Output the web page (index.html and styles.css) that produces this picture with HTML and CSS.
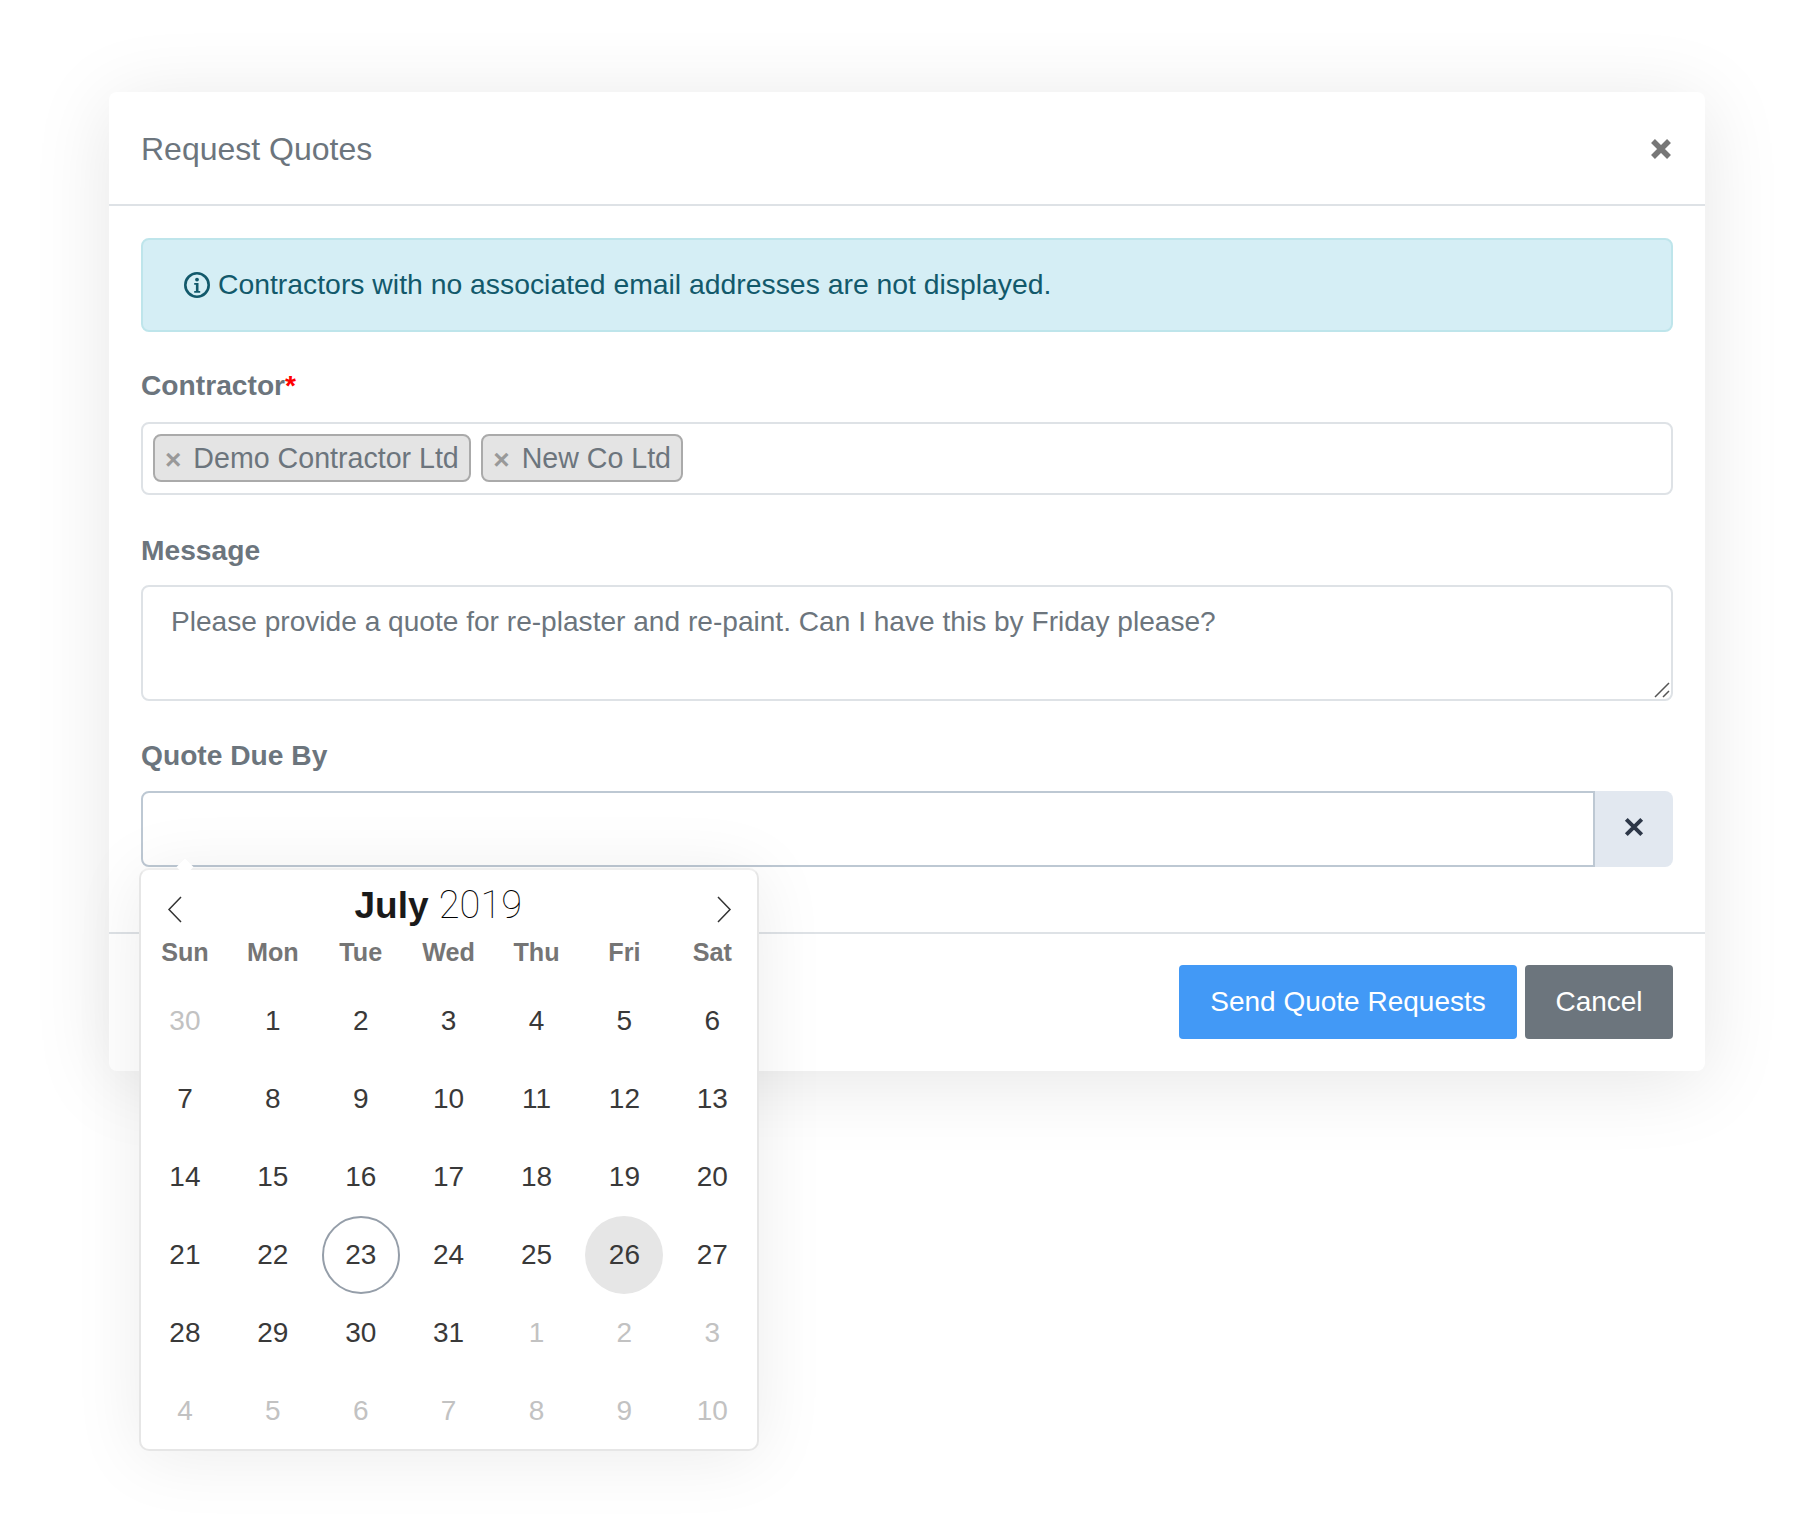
FILE: index.html
```html
<!DOCTYPE html>
<html lang="en">
<head>
<meta charset="utf-8">
<title>Request Quotes</title>
<link rel="stylesheet" href="styles.css">
</head>
<body>
<section class="modal">
  <header class="modal-header">
    <h1 class="modal-title">Request Quotes</h1>
    <svg class="close-icon" viewBox="0 0 22 22"><path d="M3 3 19 19M19 3 3 19"/></svg>
  </header>
  <div class="modal-body">
    <div class="alert">
      <svg class="info-icon" viewBox="0 0 28 28"><circle cx="14" cy="14" r="11.7"/><circle class="info-dot" cx="14" cy="8.6" r="1.9"/><path class="info-stem" d="M11.2 12h4.3v8h1.7v1.8h-6V20h1.7v-6.2h-1.7z"/></svg>
      <span class="alert-text">Contractors with no associated email addresses are not displayed.</span>
    </div>
    <label class="field-label first">Contractor<span class="required">*</span></label>
    <div class="multi-select">
      <span class="tag"><span class="tag-x">×</span>Demo Contractor Ltd</span>
      <span class="tag"><span class="tag-x">×</span>New Co Ltd</span>
    </div>
    <label class="field-label message-label">Message</label>
    <div class="message-wrap">
      <textarea class="message" readonly>Please provide a quote for re-plaster and re-paint. Can I have this by Friday please?</textarea>
      <svg class="grip" viewBox="0 0 16 16"><path d="M1 15 15 1M9 15 15 9"/></svg>
    </div>
    <label class="field-label due-label">Quote Due By</label>
    <div class="date-group">
      <input class="date-input" type="text" readonly>
      <span class="date-clear"><svg viewBox="0 0 20 20"><path d="M3 3 17 17M17 3 3 17"/></svg></span>
      <div class="calendar">
        <div class="calendar-head">
          <svg class="chevron" viewBox="0 0 16 28"><path d="M14 2 2 14.500 14 27"/></svg>
          <div class="month"><b>July</b> <span class="year">2019</span></div>
          <svg class="chevron" viewBox="0 0 16 28"><path d="M2 2 14 14.500 2 27"/></svg>
        </div>
        <div class="weekdays"><span>Sun</span><span>Mon</span><span>Tue</span><span>Wed</span><span>Thu</span><span>Fri</span><span>Sat</span></div>
        <div class="days">
          <span class="off">30</span><span>1</span><span>2</span><span>3</span><span>4</span><span>5</span><span>6</span>
          <span>7</span><span>8</span><span>9</span><span>10</span><span>11</span><span>12</span><span>13</span>
          <span>14</span><span>15</span><span>16</span><span>17</span><span>18</span><span>19</span><span>20</span>
          <span>21</span><span>22</span><span class="today">23</span><span>24</span><span>25</span><span class="hover">26</span><span>27</span>
          <span>28</span><span>29</span><span>30</span><span>31</span><span class="off">1</span><span class="off">2</span><span class="off">3</span>
          <span class="off">4</span><span class="off">5</span><span class="off">6</span><span class="off">7</span><span class="off">8</span><span class="off">9</span><span class="off">10</span>
        </div>
      </div>
    </div>
  </div>
  <footer class="modal-footer">
    <button class="btn btn-primary">Send Quote Requests</button>
    <button class="btn btn-secondary">Cancel</button>
  </footer>
</section>
</body>
</html>
```
FILE: styles.css
```css
* { box-sizing: border-box; }
html, body { margin: 0; background: #fff; }
body {
  height: 1538px;
  overflow: hidden;
  padding: 92px 101px 0 109px;
  font-family: "Liberation Sans", Arial, sans-serif;
  font-size: 28px;
  color: #6c757d;
}
.modal {
  background: #fff;
  border-radius: 8px;
  box-shadow: 0 10px 80px rgba(0, 0, 0, .1);
}
.modal-header {
  height: 114px;
  padding: 2px 32px 0;
  display: flex;
  align-items: center;
  justify-content: space-between;
  border-bottom: 2px solid #dee2e6;
}
.modal-title { margin: 0; font-size: 32px; font-weight: 400; color: #6c757d; }
.close-icon { width: 22px; height: 22px; margin-right: 1px; }
.close-icon path { fill: none; stroke: #777; stroke-width: 5.500; }
.modal-body { padding: 32px 32px 65px; }
.alert {
  height: 94px;
  padding: 0 40px;
  display: flex;
  align-items: center;
  gap: 7px;
  background: #d5eef5;
  border: 2px solid #bee5eb;
  border-radius: 8px;
  color: #12596b;
  font-size: 28.350px;
}
.alert-text { margin-bottom: 2px; }
.info-icon { width: 28px; height: 28px; flex: none; }
.info-icon circle { fill: none; stroke: #12596b; stroke-width: 2.600; }
.info-icon .info-dot { fill: #12596b; stroke: none; }
.info-icon .info-stem { fill: #12596b; }
.field-label { display: block; height: 40px; line-height: 40px; font-size: 28.200px; font-weight: 700; }
.first { margin: 33px 0 17px; }
.message-label { margin: 35px 0 15px; }
.due-label { margin: 34px 0 16px; }
.required { color: #f00; }
.multi-select {
  height: 73px;
  padding: 10px;
  display: flex;
  gap: 10.500px;
  border: 2px solid #dee2e6;
  border-radius: 8px;
}
.tag {
  height: 48px;
  padding: 0 10px;
  display: flex;
  align-items: center;
  background: #e4e4e4;
  border: 2px solid #aaa;
  border-radius: 8px;
  font-size: 28.600px;
}
.tag-x { color: #999; font-size: 28px; font-weight: 700; margin-right: 12px; padding-top: 3px; }
.message-wrap { position: relative; }
.message {
  display: block;
  width: 100%;
  height: 116px;
  padding: 14px 28px;
  border: 2px solid #dee2e6;
  border-radius: 8px;
  font: 28.100px/1.5 "Liberation Sans", Arial, sans-serif;
  color: #6c757d;
  outline: none;
  resize: none;
}
.grip {
  position: absolute;
  right: 3px;
  bottom: 3px;
  width: 16px;
  height: 16px;
}
.grip path { fill: none; stroke: #555; stroke-width: 1.500; }
.date-group { position: relative; display: flex; height: 76px; }
.date-input {
  flex: 1;
  min-width: 0;
  border: 2px solid #bdc8d3;
  border-radius: 8px 0 0 8px;
  outline: none;
}
.date-clear {
  width: 78px;
  padding-bottom: 4px;
  display: flex;
  align-items: center;
  justify-content: center;
  background: #e2e8f0;
  border-radius: 0 8px 8px 0;
}
.date-clear svg { width: 22px; height: 22px; }
.date-clear path { fill: none; stroke: #2d3748; stroke-width: 3.600; }
.calendar {
  position: absolute;
  top: 77px;
  left: -2px;
  width: 620px;
  height: 583px;
  background: #fff;
  border-radius: 10px;
  border: 2px solid #e6e6e6;
  border-top-color: #eee;
  box-shadow: 0 6px 70px rgba(0, 0, 0, .08);
}
.calendar::before {
  content: "";
  position: absolute;
  left: 38px;
  top: -9px;
  width: 12px;
  height: 12px;
  background: #fff;
  transform: rotate(45deg);
}
.calendar-head {
  height: 59px;
  padding: 0 25px 0 25.500px;
  display: flex;
  align-items: center;
  justify-content: space-between;
  position: relative;
}
.chevron { width: 16px; height: 28px; margin-top: 18px; }
.chevron path { fill: none; stroke: #333; stroke-width: 1.500; }
.month { font-size: 37px; color: #1a1a1a; margin: 10px 22px 0 0; }
.month b { font-weight: 700; }
.year { font-family: Roboto, "Liberation Sans", sans-serif; font-size: 38px; font-weight: 100; color: #000; }
.weekdays, .days {
  display: grid;
  grid-template-columns: repeat(7, 87.900px);
  justify-items: center;
}
.weekdays {
  height: 47px;
  margin-bottom: 6px;
  align-items: center;
  font-size: 25.200px;
  font-weight: 700;
  color: #757575;
}
.days { grid-auto-rows: 78px; color: #393939; font-size: 28px; }
.days span {
  width: 78px;
  height: 78px;
  display: flex;
  align-items: center;
  justify-content: center;
  border-radius: 50%;
}
.days .off { color: #c2c2c2; }
.days .today { border: 2px solid #959ea9; }
.days .hover { background: #e6e6e6; }
.modal-footer {
  height: 139px;
  padding: 31px 32px;
  display: flex;
  justify-content: flex-end;
  gap: 8px;
  border-top: 2px solid #dee2e6;
}
.btn {
  height: 74px;
  border: none;
  border-radius: 4px;
  font: 28px "Liberation Sans", Arial, sans-serif;
  color: #fff;
}
.btn-primary { width: 338px; background: #4299f6; }
.btn-secondary { width: 148px; background: #6c757d; }
```
